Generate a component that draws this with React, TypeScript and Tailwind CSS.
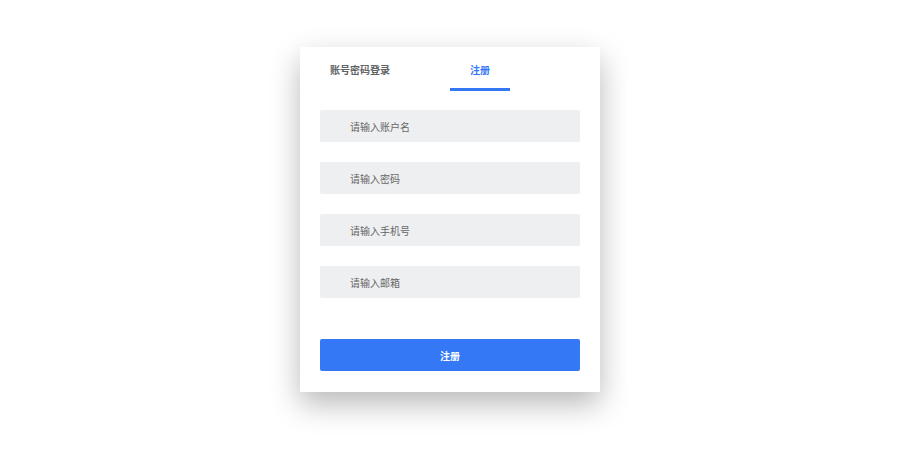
import { useState } from 'react'

const FIELDS = [
  { key: 'account', placeholder: '请输入账户名', type: 'text' },
  { key: 'password', placeholder: '请输入密码', type: 'password' },
  { key: 'phone', placeholder: '请输入手机号', type: 'tel' },
  { key: 'email', placeholder: '请输入邮箱', type: 'email' },
]

export default function App() {
  const [tab, setTab] = useState<'login' | 'register'>('register')

  return (
    <div
      className="flex min-h-[474px] w-full justify-center bg-white pt-[47px]"
      style={{ fontFamily: '"Noto Sans CJK SC", "Noto Sans", sans-serif' }}
    >
      <div className="h-[345px] w-[300px] bg-white px-5 pb-5 shadow-[0_12px_28px_rgba(0,0,0,0.28)]">
        {/* tabs */}
        <div className="-mx-5 flex h-[44px]">
          <button
            type="button"
            onClick={() => setTab('login')}
            className={`relative flex w-[120px] items-center justify-center text-[10px] font-semibold ${
              tab === 'login' ? 'text-[#3478f6]' : 'text-[#5f6466]'
            }`}
          >
            账号密码登录
            {tab === 'login' && (
              <span className="absolute bottom-0 left-[30px] h-[3px] w-[60px] bg-[#3478f6]" />
            )}
          </button>
          <button
            type="button"
            onClick={() => setTab('register')}
            className={`relative flex w-[120px] items-center justify-center text-[10px] font-semibold ${
              tab === 'register' ? 'text-[#3478f6]' : 'text-[#5f6466]'
            }`}
          >
            注册
            {tab === 'register' && (
              <span className="absolute bottom-0 left-[30px] h-[3px] w-[60px] bg-[#3478f6]" />
            )}
          </button>
        </div>

        {/* form */}
        <div className="mt-[19px] flex flex-col gap-5">
          {FIELDS.map((f) => (
            <input
              key={f.key}
              type={f.type}
              placeholder={f.placeholder}
              className="h-[32px] w-full rounded-[2px] bg-[#eeeff0] pl-[30px] text-[10px] text-[#333] outline-none placeholder:text-[#666]"
            />
          ))}
        </div>

        <button
          type="button"
          className="mt-[41px] flex h-[32px] w-full items-center justify-center rounded-[2px] bg-[#3478f6] text-[10px] font-bold text-white"
        >
          注册
        </button>
      </div>
    </div>
  )
}
